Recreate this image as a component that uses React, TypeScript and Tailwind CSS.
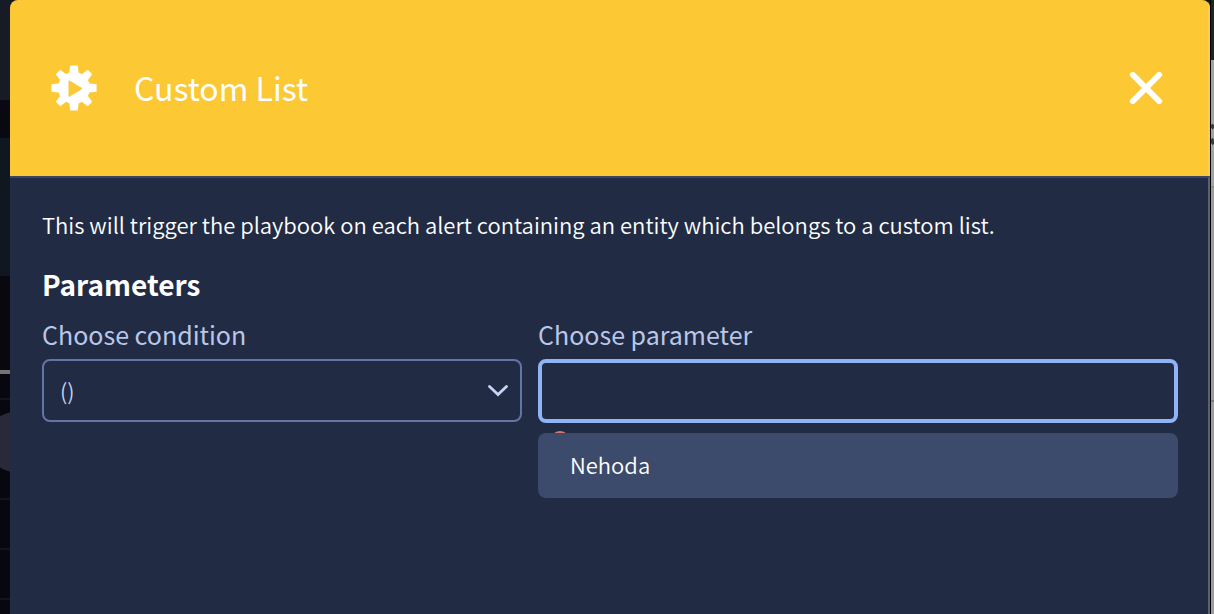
import { useState } from "react";

const options = ["Nehoda"];

function PlayGearIcon() {
  return (
    <svg viewBox="0 0 46 46" className="size-[46px] shrink-0" aria-hidden="true">
      <g fill="#fff">
        <circle cx="23" cy="23" r="16" />
        {[0, 90, 180, 270].map((deg) => (
          <path key={deg} d="M19.2 0.4h7.6l1 8.6h-9.6z" transform={`rotate(${deg} 23 23)`} />
        ))}
        {[45, 135, 225, 315].map((deg) => (
          <path key={deg} d="M19.9 0.4h6.2l1.2 8.6h-8.6z" transform={`rotate(${deg} 23 23)`} />
        ))}
      </g>
      <path d="M18 15.8v15.6L31 23.6z" fill="#fcc834" stroke="#fcc834" strokeLinejoin="round" />
    </svg>
  );
}

function CloseIcon() {
  return (
    <svg viewBox="0 0 34 34" className="size-[34px]" aria-hidden="true">
      <path d="M3.8 3.8l26.4 26.4M30.2 3.8l-26.4 26.4" stroke="#fff" strokeWidth="5.8" strokeLinecap="round" />
    </svg>
  );
}

function ChevronIcon() {
  return (
    <svg
      viewBox="0 0 20 12"
      className="pointer-events-none absolute right-[14px] top-[26px] h-3 w-5"
      fill="none"
      aria-hidden="true"
    >
      <path d="M1.5 1.5l8.5 8 8.5-8" stroke="#c5d3f5" strokeWidth="2.8" strokeLinecap="round" />
    </svg>
  );
}

// Dimmed page behind the dialog, left side
function BackdropLeft() {
  return (
    <div className="relative flex w-[10px] shrink-0 flex-col overflow-hidden bg-[#07080f]">
      <div className="h-[100px] bg-[#161b25]" />
      <div className="h-[38px] bg-[#0a0810]" />
      <div className="h-[138px] bg-[#101720]" />
      <div className="h-[94px] bg-[#09080f]" />
      <div className="h-1 bg-[#747474]" />
      <div className="h-[26px] border-b-2 border-[#121419]" />
      <div className="h-[100px] border-b-2 border-[#121419]" />
      <div className="h-[50px] border-b-2 border-[#121419]" />
      <div className="h-[50px] border-b-2 border-[#121419]" />
      <div className="absolute -left-[14px] top-[412px] size-[60px] rounded-full bg-[#282a3c]" />
    </div>
  );
}

// Dimmed page behind the dialog, right side
function BackdropRight() {
  return (
    <div className="flex w-1 shrink-0 flex-col border-l border-black bg-[#9f9d9b]">
      <div className="h-[60px] bg-[#222224]" />
      <div className="h-[128px] border-b-2 border-[#8d8d8d] bg-[#a3a3a3] pt-[64px]">
        <svg viewBox="0 0 3 22" className="h-[22px] w-[3px]" aria-hidden="true">
          <path d="M0 1l3 3M0 15l3 5" stroke="#3c3c3c" strokeWidth="4" />
        </svg>
      </div>
      <div className="h-[214px] border-b-2 border-[#7d7b79]" />
    </div>
  );
}

export default function App() {
  const [condition, setCondition] = useState("()");
  const [parameter, setParameter] = useState("");

  return (
    <div className="flex min-h-screen overflow-hidden bg-[#14171f] font-['Noto_Sans_CJK_SC','Noto_Sans',sans-serif] text-white">
      <BackdropLeft />
      <main
        role="dialog"
        aria-labelledby="dialog-title"
        className="flex min-w-0 flex-1 flex-col overflow-hidden rounded-t-lg bg-[#212c44]"
      >
        <header className="flex h-[176px] shrink-0 items-center border-r-2 border-[#fdcd50] bg-[#fcc834] pl-[41px] pr-[45px]">
          <PlayGearIcon />
          <h1 id="dialog-title" className="ml-[37px] pb-[2px] text-[32px] leading-10 font-normal">
            Custom List
          </h1>
          <button type="button" aria-label="Close" className="ml-auto">
            <CloseIcon />
          </button>
        </header>

        <div className="flex-1 border-t-2 border-r-2 border-t-[#3a4663] border-r-[#5c6070] pt-[30px] pr-[30px] pl-8">
          <p className="text-[22px] leading-8 font-[350]">
            This will trigger the playbook on each alert containing an entity which belongs to a custom list.
          </p>
          <h2 className="mt-6 text-[28px] leading-10 font-bold">Parameters</h2>

          <div className="mt-[14px] grid grid-cols-[3fr_4fr] gap-4">
            <div>
              <label htmlFor="condition" className="block text-[25px] leading-8 text-[#b9c6e8]">
                Choose condition
              </label>
              <div className="relative mt-[9px]">
                <select
                  id="condition"
                  value={condition}
                  onChange={(e) => setCondition(e.target.value)}
                  className="h-[63px] w-full appearance-none rounded-lg border-2 border-[#6474a6] bg-transparent px-4 text-[22px] font-[350] text-[#c5d3f5] outline-none"
                >
                  <option>()</option>
                </select>
                <ChevronIcon />
              </div>
            </div>

            <div className="relative">
              <label htmlFor="parameter" className="block text-[25px] leading-8 text-[#b9c6e8]">
                Choose parameter
              </label>
              <input
                id="parameter"
                type="text"
                value={parameter}
                onChange={(e) => setParameter(e.target.value)}
                className="mt-[9px] block h-16 w-full rounded-lg border-4 border-[#8fb3f6] bg-transparent px-7 text-[22px] outline-none"
              />
              {/* validation marker, mostly hidden under the menu */}
              <span className="absolute top-[113px] left-3 size-5 rounded-full bg-[#d87575]" />
              <ul className="relative mt-[10px] overflow-hidden rounded-lg bg-[#3c4a6b]">
                {options.map((option) => (
                  <li key={option}>
                    <button
                      type="button"
                      onClick={() => setParameter(option)}
                      className="block h-[65px] w-full px-8 pb-1 text-left text-[22px] leading-8 font-[350]"
                    >
                      {option}
                    </button>
                  </li>
                ))}
              </ul>
            </div>
          </div>
        </div>
      </main>
      <BackdropRight />
    </div>
  );
}
